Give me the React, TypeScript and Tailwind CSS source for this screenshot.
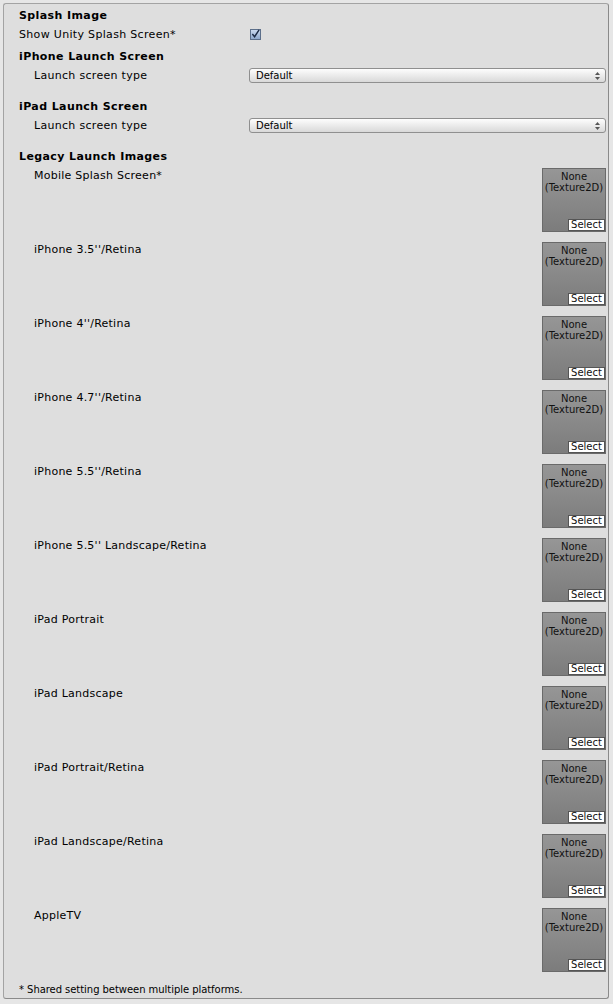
import React from "react";

const TEXTURE_ROWS = [
  "Mobile Splash Screen*",
  "iPhone 3.5''/Retina",
  "iPhone 4''/Retina",
  "iPhone 4.7''/Retina",
  "iPhone 5.5''/Retina",
  "iPhone 5.5'' Landscape/Retina",
  "iPad Portrait",
  "iPad Landscape",
  "iPad Portrait/Retina",
  "iPad Landscape/Retina",
  "AppleTV",
];

function Header({ children, className = "" }: { children: React.ReactNode; className?: string }) {
  return (
    <div className={`flex h-[14px] items-center text-[11px] font-bold leading-none tracking-[0.4px] ${className}`}>
      {children}
    </div>
  );
}

function Dropdown({ value }: { value: string }) {
  return (
    <div className="relative flex h-[15px] w-[357px] items-center rounded-[3px] border border-[#8f8f8f] bg-gradient-to-b from-[#fdfdfd] to-[#d9d9d9] pl-[6px] text-[10px] leading-none">
      {value}
      <svg className="absolute right-[5px] top-[3px]" width="5" height="8" viewBox="0 0 5 8">
        <path d="M2.5 0 L5 3 L0 3 Z" fill="#555" />
        <path d="M2.5 8 L5 5 L0 5 Z" fill="#555" />
      </svg>
    </div>
  );
}

function LaunchTypeRow({ className = "" }: { className?: string }) {
  return (
    <div className={`flex h-[15px] items-center ${className}`}>
      <div className="w-[230px] pl-[15px] text-[11px] leading-none tracking-[0.3px]">Launch screen type</div>
      <Dropdown value="Default" />
    </div>
  );
}

function TextureSlot() {
  return (
    <div className="relative flex h-[64px] w-[64px] flex-col items-center border border-[#6a6a6a] bg-gradient-to-b from-[#969696] to-[#7c7c7c] pt-[2px] text-[10px] leading-[11px] text-[#111]">
      <span>None</span>
      <span>(Texture2D)</span>
      <div className="absolute bottom-0 right-0 flex h-[12px] w-[37px] items-center justify-center border border-[#555] bg-white text-[10px] leading-none text-[#111]">
        Select
      </div>
    </div>
  );
}

export default function App() {
  return (
    <div
      className="min-h-[1004px] w-[613px] bg-[#e6e6e6] px-[3px] pt-[3px] text-black"
      style={{ fontFamily: '"DejaVu Sans", sans-serif' }}
    >
      <div className="flex h-[996px] w-[606px] flex-col rounded-[3px] border border-[#a3a3a3] border-r-[#8a8a8a] border-b-[#8a8a8a] bg-[#dedede] pl-[15px] pr-[2px] pt-[4px]">
        <Header>Splash Image</Header>
        <div className="mt-[5px] flex h-[14px] items-center">
          <div className="w-[231px] text-[11px] leading-none tracking-[0.32px]">Show Unity Splash Screen*</div>
          <div className="flex h-[11px] w-[11px] items-center justify-center border border-[#5c6f8a] bg-gradient-to-b from-[#c9d8ee] to-[#8ea8cc]">
            <svg width="10" height="10" viewBox="0 0 10 10">
              <path d="M1.5 5 L4 8 L9 0.5" fill="none" stroke="#1b2a44" strokeWidth="1.6" />
            </svg>
          </div>
        </div>
        <Header className="mt-[8px]">iPhone Launch Screen</Header>
        <LaunchTypeRow className="mt-[5px]" />
        <Header className="mt-[16px]">iPad Launch Screen</Header>
        <LaunchTypeRow className="mt-[5px]" />
        <Header className="mt-[16px]">Legacy Launch Images</Header>
        <div className="mt-[5px] flex flex-col gap-[10px]">
          {TEXTURE_ROWS.map((label) => (
            <div key={label} className="flex h-[64px] justify-between">
              <div className="pl-[15px] pt-[1px] text-[11px] leading-[14px] tracking-[0.25px]">{label}</div>
              <TextureSlot />
            </div>
          ))}
        </div>
        <div className="mt-[11px] flex h-[14px] items-center text-[10px] leading-none tracking-[-0.05px]">
          * Shared setting between multiple platforms.
        </div>
      </div>
    </div>
  );
}
